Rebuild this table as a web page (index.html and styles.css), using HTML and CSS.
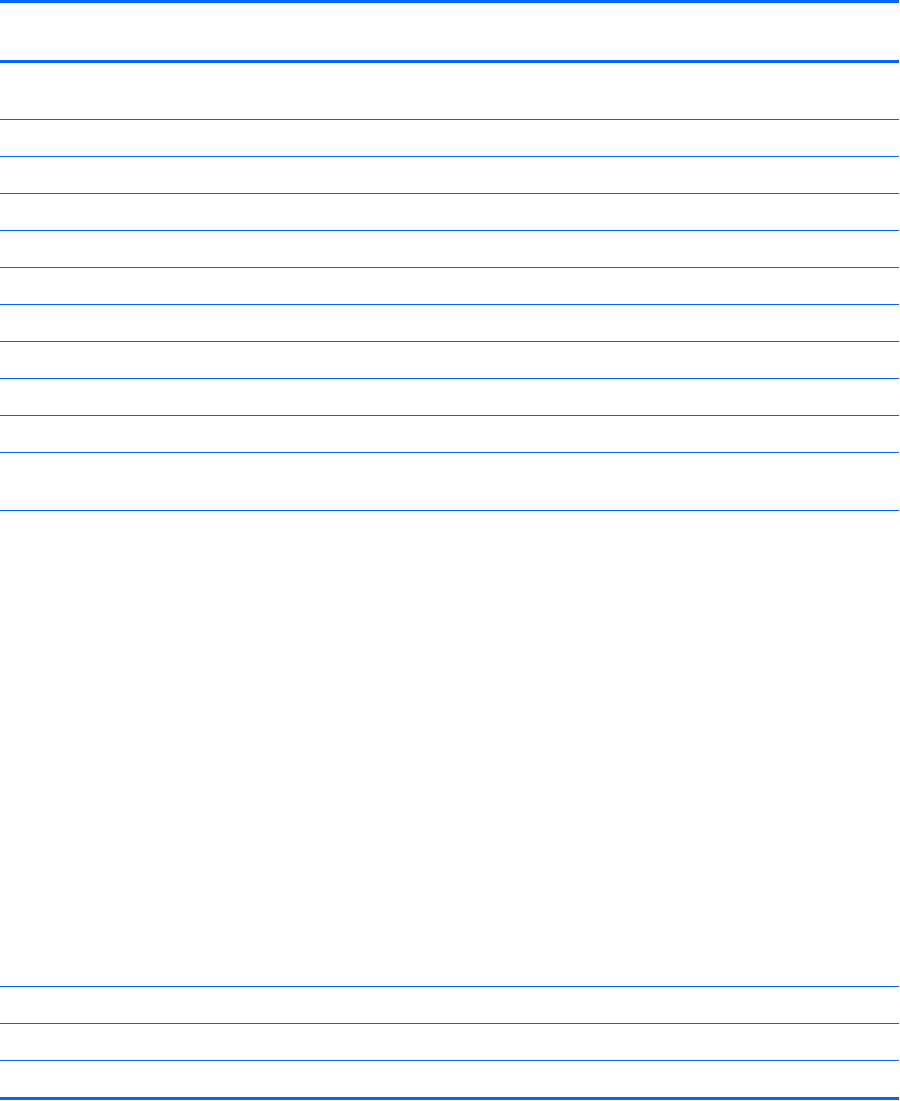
FILE: index.html
```html
<!DOCTYPE html>
<html lang="en">
<head>
<meta charset="utf-8">
<title>Table</title>
<link rel="stylesheet" href="styles.css">
</head>
<body>
<div class="table">
  <div class="row head"></div>
  <div class="row tall"></div>
  <div class="row"></div>
  <div class="row"></div>
  <div class="row"></div>
  <div class="row"></div>
  <div class="row"></div>
  <div class="row"></div>
  <div class="row"></div>
  <div class="row"></div>
  <div class="row"></div>
  <div class="row tall2"></div>
  <div class="row big"></div>
  <div class="row"></div>
  <div class="row"></div>
  <div class="row last"></div>
</div>
</body>
</html>
```
FILE: styles.css
```css
html, body {
  margin: 0;
  padding: 0;
  background: #ffffff;
  font-family: "Liberation Sans", Arial, sans-serif;
}
.table {
  width: 899px;
  display: flex;
  flex-direction: column;
  border-top: 3px solid #0066ff;
}
.row {
  height: 36px;
  border-bottom: 1px solid #0066ff;
  flex: none;
}
.head {
  height: 57px;
  border-bottom: 3px solid #0066ff;
}
.tall {
  height: 56px;
}
.tall2 {
  height: 57px;
}
.big {
  height: 475px;
}
.last {
  border-bottom: 3px solid #0066ff;
}
```
